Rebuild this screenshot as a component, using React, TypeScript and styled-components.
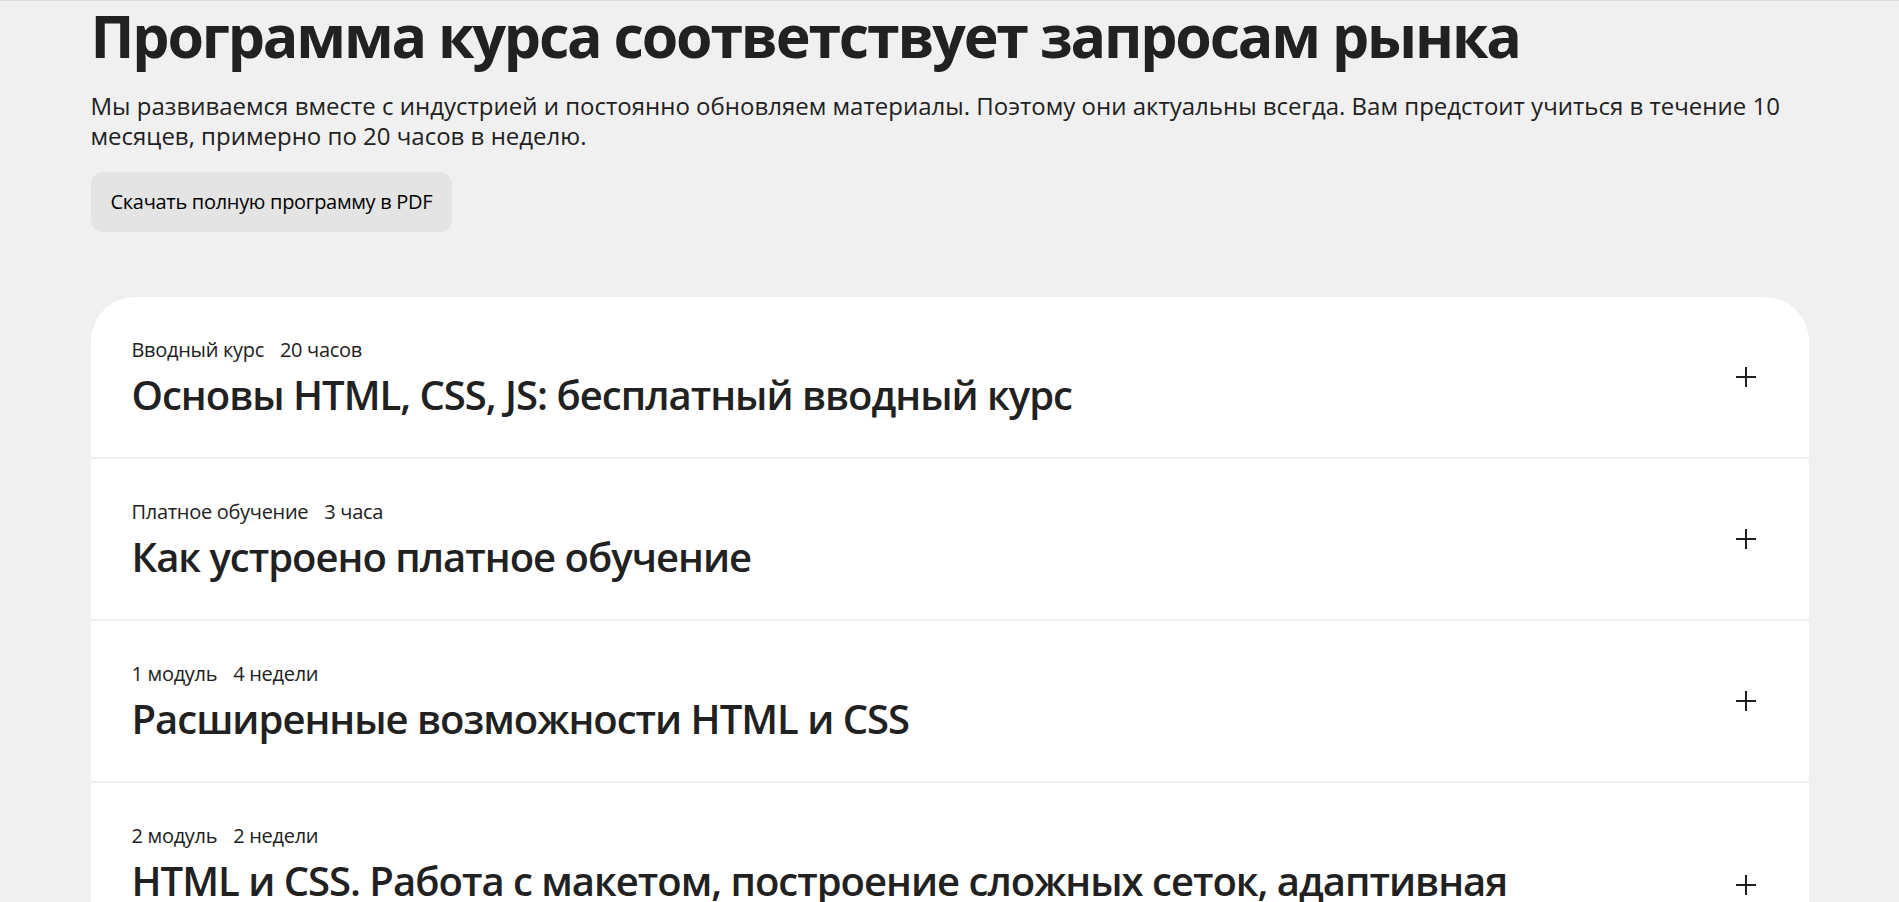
import * as React from "react";
import styled, { createGlobalStyle } from "styled-components";

const modules = [
  { kind: "Вводный курс", time: "20 часов", title: "Основы HTML, CSS, JS: бесплатный вводный курс" },
  { kind: "Платное обучение", time: "3 часа", title: "Как устроено платное обучение" },
  { kind: "1 модуль", time: "4 недели", title: "Расширенные возможности HTML и CSS" },
  {
    kind: "2 модуль",
    time: "2 недели",
    title: "HTML и CSS. Работа с макетом, построение сложных сеток, адаптивная вёрстка",
  },
  { kind: "3 модуль", time: "3 недели", title: "Основы JavaScript" },
];

const App = () => (
  <>
    <GlobalStyle />
    <Page>
      <Container>
        <Title>Программа курса соответствует запросам рынка</Title>
        <Lead>
          Мы развиваемся вместе с индустрией и постоянно обновляем материалы. Поэтому они актуальны
          всегда. Вам предстоит учиться в течение 10 месяцев, примерно по 20 часов в неделю.
        </Lead>
        <DownloadButton type="button">Скачать полную программу в PDF</DownloadButton>

        <ModuleList>
          {modules.map((m, i) => (
            <ModuleRow key={m.title} $first={i === 0}>
              <ModuleText>
                <Meta>
                  <span>{m.kind}</span>
                  <span>{m.time}</span>
                </Meta>
                <ModuleTitle>{m.title}</ModuleTitle>
              </ModuleText>
              <PlusButton type="button" aria-label="Развернуть">
                <svg width="20" height="20" viewBox="0 0 20 20" fill="none">
                  <path d="M10 0v20M0 10h20" stroke="#212121" strokeWidth="2" />
                </svg>
              </PlusButton>
            </ModuleRow>
          ))}
        </ModuleList>
      </Container>
    </Page>
  </>
);

const GlobalStyle = createGlobalStyle`
  html, body {
    margin: 0;
    padding: 0;
    background: #f0f0f0;
  }
  body {
    font-family: "Open Sans", "Noto Sans", sans-serif;
    color: #212121;
    overflow: hidden;
  }
  * {
    box-sizing: border-box;
  }
`;

const Page = styled.main`
  border-top: 1px solid #dcdcdc;
  min-height: 100vh;
`;

const Container = styled.div`
  width: 1718px;
  margin: 0 auto;
`;

const Title = styled.h2`
  margin: 1px 0 0;
  font-size: 59px;
  line-height: 66px;
  font-weight: 700;
  letter-spacing: -2.2px;
`;

const Lead = styled.p`
  margin: 23px 0 0;
  font-size: 24px;
  line-height: 30px;
  font-weight: 400;
`;

const DownloadButton = styled.button`
  margin-top: 21px;
  padding: 18px 20px;
  border: none;
  border-radius: 12px;
  background: #e4e4e4;
  color: #000;
  font-family: inherit;
  font-size: 20px;
  line-height: 24px;
  letter-spacing: -0.3px;
  cursor: pointer;
`;

const ModuleList = styled.ul`
  list-style: none;
  margin: 65px 0 0;
  padding: 0;
  display: flex;
  flex-direction: column;
  gap: 2px;
`;

const ModuleRow = styled.li<{ $first?: boolean }>`
  display: flex;
  align-items: center;
  justify-content: space-between;
  padding: 40px 53px 40px 41px;
  background: #fff;
  border-radius: ${(p) => (p.$first ? "44px 44px 0 0" : "0")};
`;

const ModuleText = styled.div`
  display: flex;
  flex-direction: column;
  gap: 10px;
  max-width: 1420px;
`;

const Meta = styled.div`
  display: flex;
  gap: 16px;
  font-size: 20px;
  line-height: 26px;
  letter-spacing: -0.3px;
`;

const ModuleTitle = styled.h3`
  margin: 0;
  font-size: 40px;
  line-height: 44px;
  font-weight: 550;
  letter-spacing: -1px;
`;

const PlusButton = styled.button`
  display: flex;
  padding: 0;
  border: none;
  background: none;
  cursor: pointer;
`;

export default App;
